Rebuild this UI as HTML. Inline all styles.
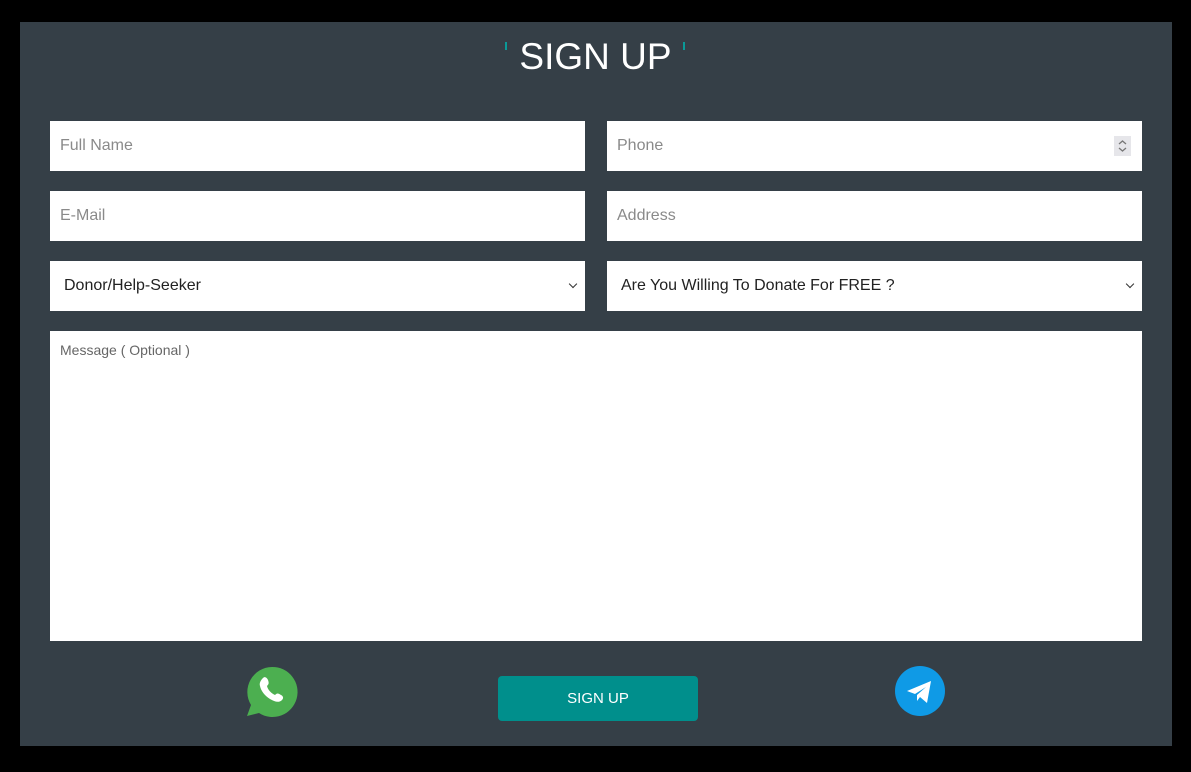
<!DOCTYPE html>
<html><head><style>
body{margin:0;background:#000;width:1191px;height:772px;position:relative;overflow:hidden;font-family:"Liberation Sans",sans-serif}
.panel{position:absolute;left:20px;top:22px;width:1152px;height:724px;background:#353f47}
.f{position:absolute;background:#fff;height:50px;width:535px;box-sizing:border-box;padding-left:10px;line-height:50px;font-size:16px;color:#8a8a8a}
.s{color:#222;padding-left:14px}
.s:after{content:"";position:absolute;right:9px;top:20px;width:5px;height:5px;border-right:1.5px solid #333;border-bottom:1.5px solid #333;transform:rotate(45deg)}
h1{position:absolute;left:0;width:100%;top:36px;margin:0;text-align:center;font-weight:normal;font-size:37px;color:#fff;line-height:42px}
.q{position:absolute;top:42px;width:2px;height:8px;background:#0a9a98}
</style></head><body>
<div class="panel"></div>
<h1>SIGN UP</h1>
<div class="q" style="left:505px"></div><div class="q" style="left:683px"></div>
<div class="f" style="left:50px;top:121px">Full Name</div>
<div class="f" style="left:607px;top:121px">Phone<div style="position:absolute;right:11px;top:15px;width:17px;height:20px;background:#e6e6ea;line-height:0"><svg width="17" height="20"><path d="M5 8l3.5-3 3.5 3M5 12l3.5 3 3.5-3" stroke="#777" fill="none" stroke-width="1.3"/></svg></div></div>
<div class="f" style="left:50px;top:191px">E-Mail</div>
<div class="f" style="left:607px;top:191px">Address</div>
<div class="f s" style="left:50px;top:261px">Donor/Help-Seeker</div>
<div class="f s" style="left:607px;top:261px">Are You Willing To Donate For FREE ?</div>
<div class="f" style="left:50px;top:331px;width:1092px;height:310px;line-height:20px;padding-top:9px;font-size:14px;color:#666">Message ( Optional )</div>
<div style="position:absolute;left:498px;top:676px;width:200px;height:45px;background:#008f8c;border-radius:4px;color:#fff;text-align:center;line-height:45px;font-size:15px">SIGN UP</div>
<svg style="position:absolute;left:245px;top:665px" width="54" height="54" viewBox="0 0 54 54"><path d="M27 2a25 25 0 1 1-13 46L2 51l4-11A25 25 0 0 1 27 2z" fill="#4caf50"/><path d="M18 13c2-2 4 0 5 2 1 3 1 4-1 6 1 4 4 7 8 9 2-2 3-2 6 0 2 1 3 3 1 5-3 3-7 2-12-1-5-3-9-8-10-13-1-3 1-6 3-8z" fill="#fff"/></svg>
<svg style="position:absolute;left:895px;top:666px" width="50" height="50" viewBox="0 0 50 50"><circle cx="25" cy="25" r="25" fill="#0f9ae6"/><path d="M12 25l24-10-4 22-7-6-3 4v-6l9-8-11 7z" fill="#fff"/></svg>
</body></html>
